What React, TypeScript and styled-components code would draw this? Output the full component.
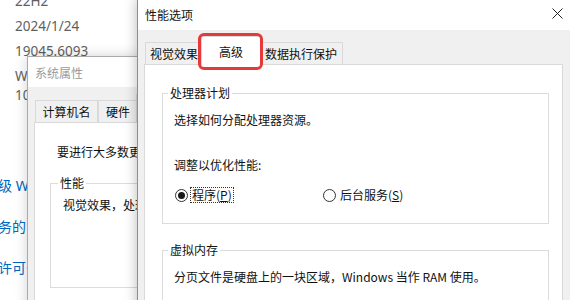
import React from "react";
import styled, { createGlobalStyle } from "styled-components";

const UI_FONT = `"Noto Sans CJK SC", "Noto Sans", sans-serif`;
const PAGE_FONT = `"Noto Sans", "Noto Sans CJK SC", sans-serif`;

const GlobalStyle = createGlobalStyle`
  html, body { margin: 0; padding: 0; background: #ffffff; }
  body { overflow: hidden; }
  #root { width: 570px; height: 300px; }
`;

const Desktop = styled.div`
  position: relative;
  width: 570px;
  height: 300px;
  overflow: hidden;
  background: #ffffff;
`;

/* ---------- settings page behind the dialogs ---------- */
const SettingsPage = styled.div`
  display: flex;
  flex-direction: column;
  margin-top: -8px;
  padding-left: 15px;
  font-family: ${PAGE_FONT};
`;

const SpecList = styled.div`
  display: flex;
  flex-direction: column;
  gap: 6px;
`;

const SpecValue = styled.div`
  font-size: 13.5px;
  line-height: 19px;
  color: #5f5f5f;
  white-space: nowrap;
`;

const LinkList = styled.div`
  display: flex;
  flex-direction: column;
  gap: 21px;
  margin-top: 71px;
`;

const LinkLine = styled.div`
  display: flex;
  margin-left: -17px;
  height: 20px;
  line-height: 20px;
  font-size: 14px;
  color: #0067c0;
  white-space: nowrap;
`;

const HiddenLead = styled.span`
  display: flex;
  justify-content: flex-end;
  width: 0;
  min-width: 0;
  flex-shrink: 0;
`;

/* ---------- windows ---------- */
const Window = styled.section<{
  $left: number;
  $top: number;
  $width: number;
  $height: number;
  $z: number;
  $active?: boolean;
}>`
  position: absolute;
  z-index: ${(p) => p.$z};
  left: ${(p) => p.$left}px;
  top: ${(p) => p.$top}px;
  width: ${(p) => p.$width}px;
  height: ${(p) => p.$height}px;
  box-sizing: border-box;
  display: flex;
  flex-direction: column;
  background: #f0f0f0;
  border: 1px solid ${(p) => (p.$active ? "#8e8e8e" : "#ababab")};
  box-shadow: 0 0 12px rgba(0, 0, 0, ${(p) => (p.$active ? 0.28 : 0.18)});
  font-family: ${UI_FONT};
  font-size: 12px;
  color: #111111;
`;

const TitleBar = styled.header<{ $height: number }>`
  display: flex;
  align-items: center;
  justify-content: space-between;
  height: ${(p) => p.$height}px;
  flex-shrink: 0;
  padding-left: 7px;
  background: #ffffff;
`;

const Title = styled.span<{ $active?: boolean }>`
  font-size: 12px;
  color: ${(p) => (p.$active ? "#111111" : "#9a9a9a")};
`;

const CloseButton = styled.div`
  display: flex;
  align-items: center;
  justify-content: center;
  width: 46px;
  height: 100%;
  margin-top: -2px;
`;

const WindowBody = styled.div<{ $pad: string }>`
  flex: 1;
  display: flex;
  flex-direction: column;
  padding: ${(p) => p.$pad};
  min-height: 0;
`;

const TabStrip = styled.div`
  display: flex;
  align-items: flex-end;
  padding-left: 1px;
  position: relative;
  z-index: 1;
`;

const Tab = styled.div<{ $width: number; $selected?: boolean }>`
  position: relative;
  box-sizing: border-box;
  display: flex;
  align-items: center;
  justify-content: center;
  flex-shrink: 0;
  width: ${(p) => (p.$selected ? p.$width + 4 : p.$width)}px;
  height: ${(p) => (p.$selected ? 29 : 22)}px;
  margin: ${(p) => (p.$selected ? "0 -2px -1px" : "0")};
  border: 1px solid #d9d9d9;
  border-bottom: none;
  background: ${(p) => (p.$selected ? "#ffffff" : "#f0f0f0")};
  z-index: ${(p) => (p.$selected ? 2 : 1)};
  white-space: nowrap;
  color: #111111;
`;

const Highlight = styled.span`
  position: absolute;
  top: -4px;
  left: -4px;
  right: -3px;
  bottom: -5px;
  border: 3px solid #e63a3a;
  border-radius: 6px;
  pointer-events: none;
`;

const TabPanel = styled.div<{ $pad: string }>`
  flex: 1;
  display: flex;
  flex-direction: column;
  background: #ffffff;
  border: 1px solid #d9d9d9;
  padding: ${(p) => p.$pad};
  min-height: 0;
`;

const GroupBox = styled.fieldset<{ $padLeft: number; $gapTop?: number; $padTop: number; $padBottom: number }>`
  margin: ${(p) => p.$gapTop ?? 0}px 0 0 0;
  min-width: 0;
  border: 1px solid #dcdcdc;
  padding: ${(p) => p.$padTop}px 12px ${(p) => p.$padBottom}px ${(p) => p.$padLeft}px;
  display: flex;
  flex-direction: column;
  flex-shrink: 0;
`;

const Legend = styled.legend<{ $shift: number }>`
  margin-left: ${(p) => -p.$shift}px;
  padding: 0 2px;
  line-height: 16px;
  font-size: 12px;
  color: #111111;
`;

const Line = styled.p<{ $gapTop?: number; $indent?: number }>`
  margin: ${(p) => p.$gapTop ?? 0}px 0 0 ${(p) => p.$indent ?? 0}px;
  line-height: 16px;
  font-size: 12px;
  color: #111111;
  white-space: nowrap;
`;

const RadioRow = styled.div`
  display: grid;
  grid-template-columns: 148px auto;
  align-items: center;
  height: 18px;
  margin-top: 13px;
`;

const RadioOption = styled.label`
  display: flex;
  align-items: center;
`;

const RadioCircle = styled.span<{ $checked?: boolean }>`
  box-sizing: border-box;
  display: flex;
  align-items: center;
  justify-content: center;
  width: 13px;
  height: 13px;
  margin-left: 1px;
  border-radius: 50%;
  border: 1px solid #333333;
  background: #ffffff;
  &::after {
    content: "";
    display: ${(p) => (p.$checked ? "block" : "none")};
    width: 7px;
    height: 7px;
    border-radius: 50%;
    background: #1a1a1a;
  }
`;

const RadioLabel = styled.span<{ $focused?: boolean }>`
  margin-left: 2px;
  padding: 0 1px;
  line-height: 14px;
  border: 1px dotted ${(p) => (p.$focused ? "#333333" : "transparent")};
  white-space: nowrap;
`;

const AccessKey = styled.span`
  text-decoration: underline;
  text-underline-offset: 1px;
`;

const ButtonRow = styled.div`
  display: flex;
  justify-content: flex-end;
  margin-top: 41px;
`;

const PushButton = styled.div`
  box-sizing: border-box;
  height: 23px;
  padding: 0 14px;
  display: flex;
  align-items: center;
  border: 1px solid #adadad;
  background: #e1e1e1;
`;

const CloseIcon = () => (
  <svg width="11" height="11" viewBox="0 0 11 11" aria-hidden="true">
    <path d="M0.5 0.5 L10.5 10.5 M10.5 0.5 L0.5 10.5" stroke="#222" strokeWidth="1" fill="none" />
  </svg>
);

export default function App() {
  return (
    <>
      <GlobalStyle />
      <Desktop>
        <SettingsPage>
          <SpecList>
            <SpecValue>22H2</SpecValue>
            <SpecValue>2024/1/24</SpecValue>
            <SpecValue>19045.6093</SpecValue>
            <SpecValue>
              Windows Feature Experience Pack
              <br />
              1000.19061.1000.0
            </SpecValue>
          </SpecList>
          <LinkList>
            <LinkLine>
              <HiddenLead>更改产品密钥或升</HiddenLead>级 Windows
            </LinkLine>
            <LinkLine>
              <HiddenLead>阅读适用于我们服</HiddenLead>务的 Microsoft 服务协议
            </LinkLine>
            <LinkLine>
              <HiddenLead>阅读 Microsoft 软件</HiddenLead>许可条款
            </LinkLine>
          </LinkList>
        </SettingsPage>

        <Window $left={27} $top={56} $width={410} $height={262} $z={1}>
          <TitleBar $height={30}>
            <Title>系统属性</Title>
          </TitleBar>
          <WindowBody $pad="7px 6px 0 6px">
            <TabStrip>
              <Tab $width={63}>计算机名</Tab>
              <Tab $width={40}>硬件</Tab>
              <Tab $width={44} $selected>高级</Tab>
              <Tab $width={64}>系统保护</Tab>
              <Tab $width={40}>远程</Tab>
            </TabStrip>
            <TabPanel $pad="21px 14px 0 15px">
              <Line $indent={7}>要进行大多数更改，你必须作为管理员登录。</Line>
              <GroupBox $gapTop={15} $padTop={6} $padLeft={12} $padBottom={10}>
                <Legend $shift={5}>性能</Legend>
                <Line>视觉效果，处理器计划，内存使用，以及虚拟内存</Line>
                <ButtonRow>
                  <PushButton>设置(S)...</PushButton>
                </ButtonRow>
              </GroupBox>
            </TabPanel>
          </WindowBody>
        </Window>

        <Window $left={137} $top={-2} $width={444} $height={320} $z={2} $active>
          <TitleBar $height={31}>
            <Title $active>性能选项</Title>
            <CloseButton>
              <CloseIcon />
            </CloseButton>
          </TitleBar>
          <WindowBody $pad="6px 17px 0 6px">
            <TabStrip>
              <Tab $width={58}>视觉效果</Tab>
              <Tab $width={56} $selected>
                高级
                <Highlight />
              </Tab>
              <Tab $width={84}>数据执行保护</Tab>
            </TabStrip>
            <TabPanel $pad="20px 13px 0 17px">
              <GroupBox $padTop={11} $padLeft={11} $padBottom={19}>
                <Legend $shift={6}>处理器计划</Legend>
                <Line>选择如何分配处理器资源。</Line>
                <Line $gapTop={29}>调整以优化性能:</Line>
                <RadioRow>
                  <RadioOption>
                    <RadioCircle $checked />
                    <RadioLabel $focused>
                      程序(<AccessKey>P</AccessKey>)
                    </RadioLabel>
                  </RadioOption>
                  <RadioOption>
                    <RadioCircle />
                    <RadioLabel>
                      后台服务(<AccessKey>S</AccessKey>)
                    </RadioLabel>
                  </RadioOption>
                </RadioRow>
              </GroupBox>
              <GroupBox $gapTop={18} $padTop={11} $padLeft={11} $padBottom={40}>
                <Legend $shift={6}>虚拟内存</Legend>
                <Line>分页文件是硬盘上的一块区域，Windows 当作 RAM 使用。</Line>
              </GroupBox>
            </TabPanel>
          </WindowBody>
        </Window>
      </Desktop>
    </>
  );
}
